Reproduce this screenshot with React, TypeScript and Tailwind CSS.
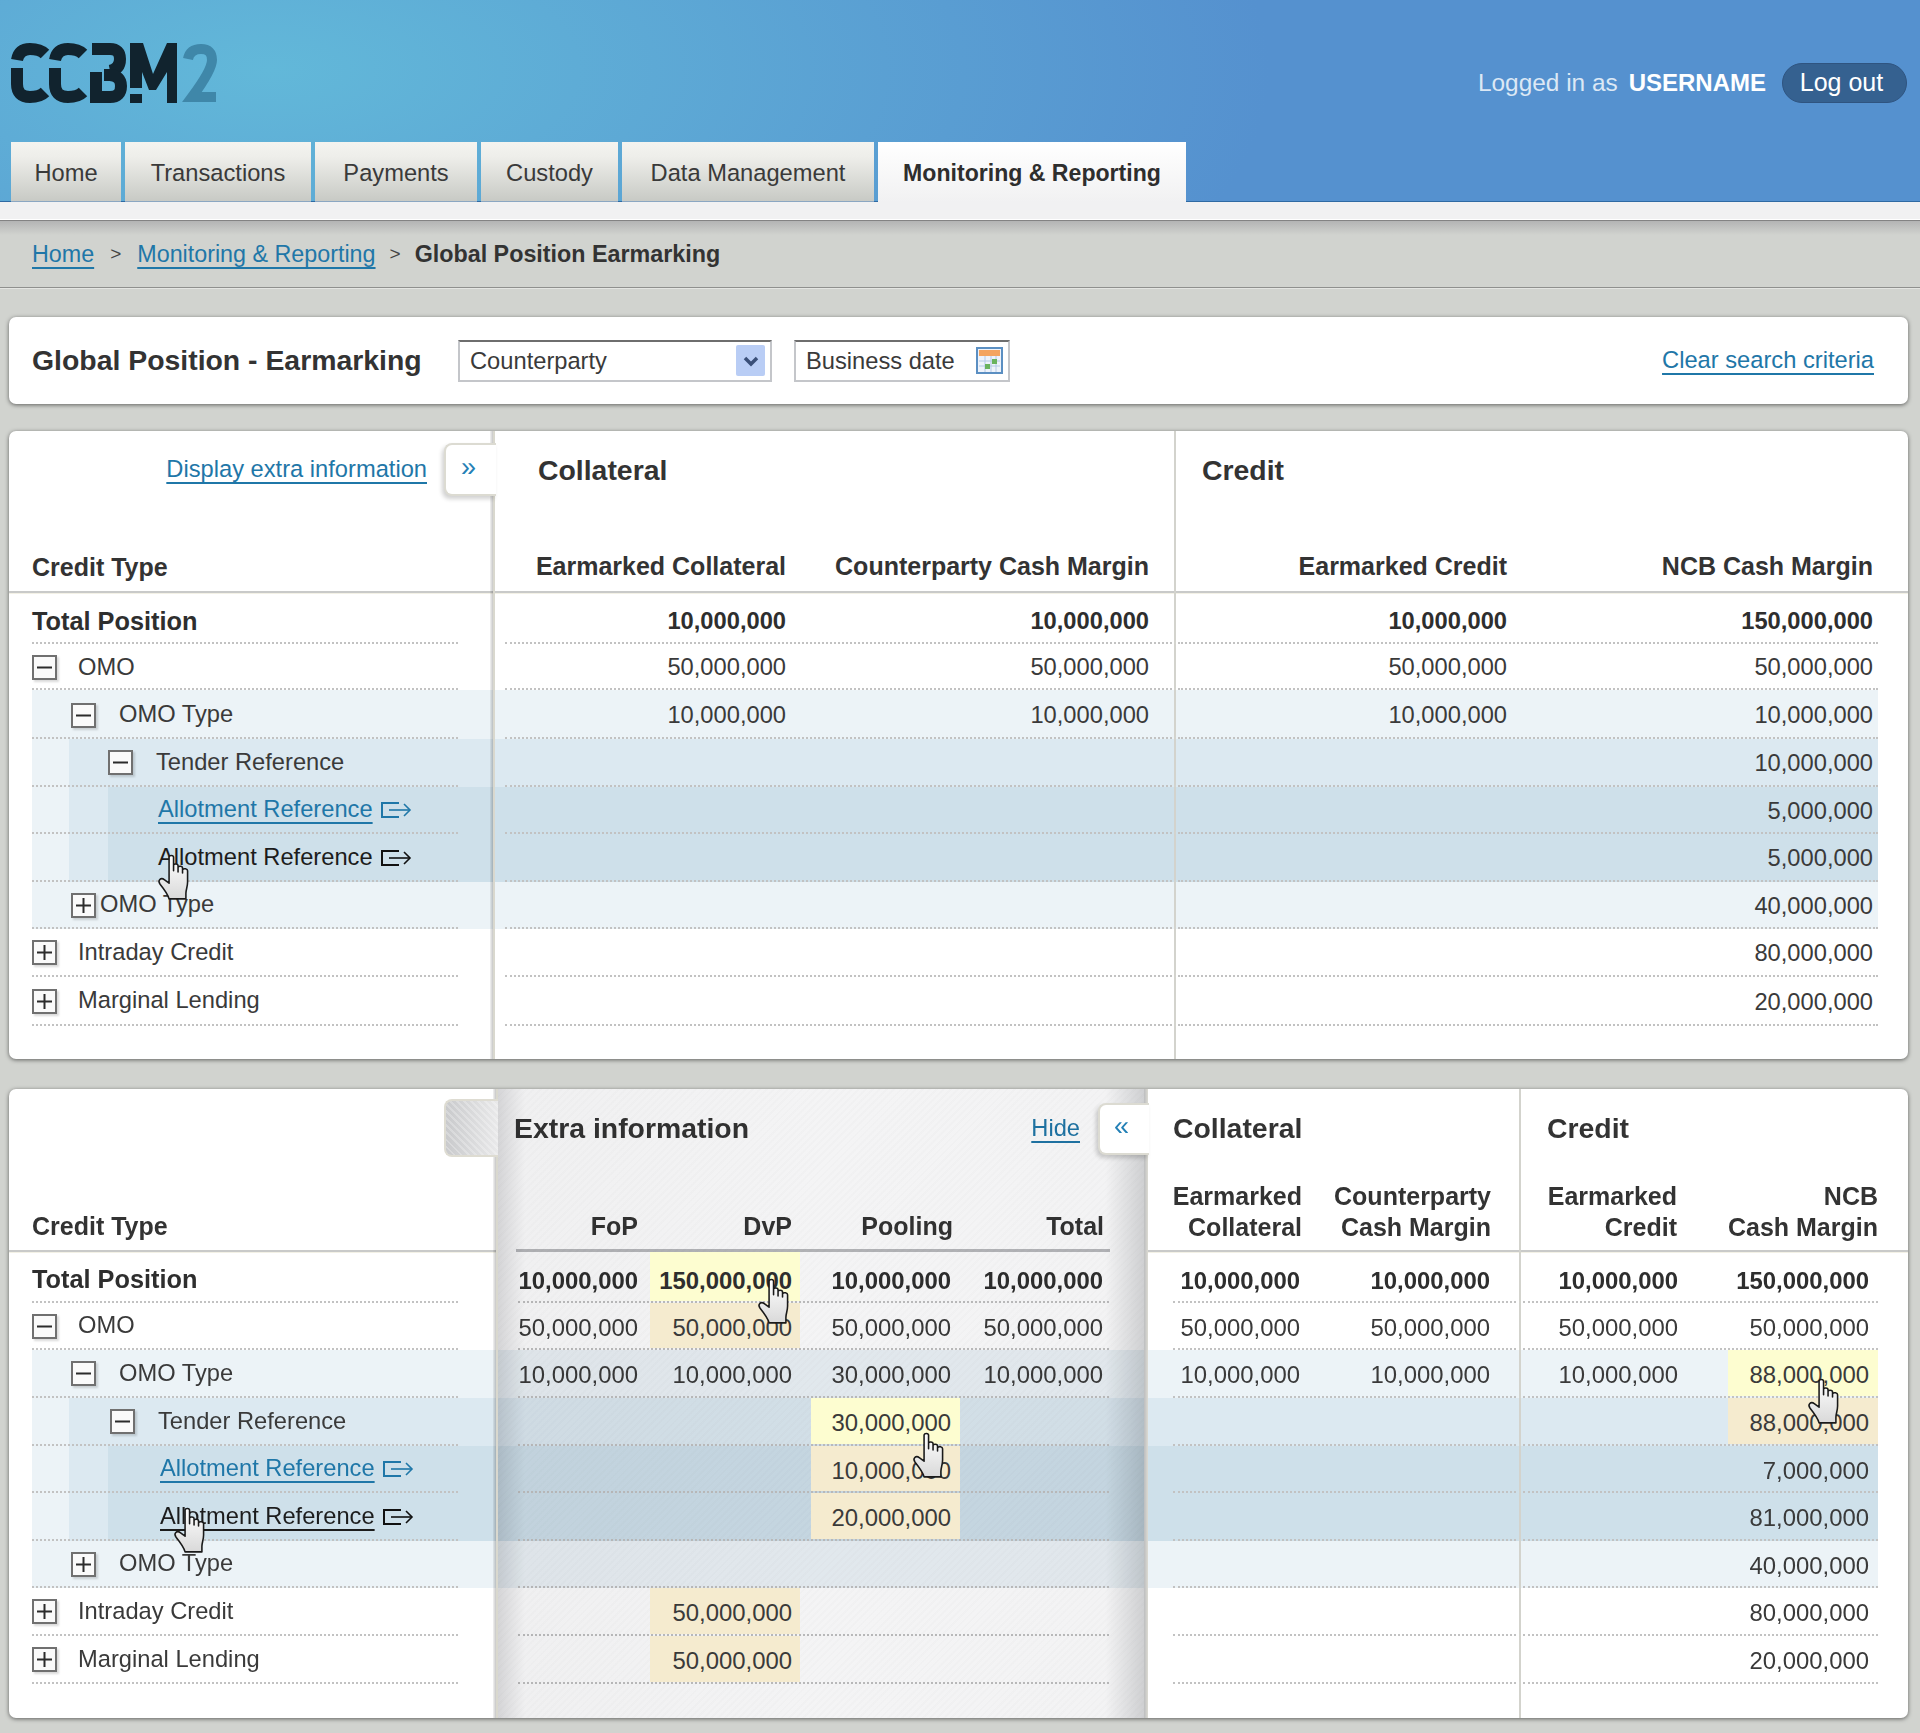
import React from "react";

type HL = "y" | "t" | undefined;

const Hand = ({ className }: { className: string }) => (
  <svg className={`absolute z-30 ${className}`} width="36" height="46" viewBox="0 0 29 41">
    <defs>
      <linearGradient id="handfill" x1="0" y1="0" x2="0" y2="1">
        <stop offset="0" stopColor="#ffffff" />
        <stop offset="1" stopColor="#d9d9d9" />
      </linearGradient>
    </defs>
    <path
      d="M11 3C11 .8 15 .8 15 3V15V10C15 8.5 19 8.5 19 10.500V16V12C19 10.500 23 10.500 23 12.500V17V14C24 12.500 27.500 13 27.500 15V25C27.500 29 26 32 26 35V40H11C10 36 7 32 3 27C.5 23.500 3.500 20.500 7 23L11 26Z"
      fill="url(#handfill)"
      stroke="#1a1a1a"
      strokeWidth="1.400"
      strokeLinejoin="round"
    />
  </svg>
);

const Box = ({ open }: { open: boolean }) => (
  <span className="flex h-[25px] w-[25px] shrink-0 items-center justify-center border-2 border-[#707070] bg-[#fafafa] shadow-[2px_2px_2px_rgba(0,0,0,0.15)]">
    <svg width="17" height="17" viewBox="0 0 17 17">
      <path d={open ? "M1 8.500H16" : "M1 8.500H16M8.500 1V16"} stroke="#2b2b2b" strokeWidth="2" />
    </svg>
  </span>
);

const ExitIcon = ({ color }: { color: string }) => (
  <svg className="ml-[7px] shrink-0" width="32" height="18" viewBox="0 0 32 18" fill="none" stroke={color} strokeWidth="2">
    <path d="M19 2H2V16H19" />
    <path d="M9 9H30" strokeWidth="1.600" />
    <path d="M24 3L30 9L24 15" strokeWidth="1.600" />
  </svg>
);

const A = ({ children, className = "" }: { children: React.ReactNode; className?: string }) => (
  <a className={`cursor-pointer text-[#1f77a8] underline decoration-[2px] underline-offset-[5px] ${className}`}>{children}</a>
);

const Chevrons = ({ children }: { children: React.ReactNode }) => (
  <span className="pb-[5px] text-[27px] leading-none text-[#2380b6]">{children}</span>
);

const Cell = ({ w, hl, bold, v, pr = "" }: { w: string; hl?: HL; bold?: boolean; v?: string; pr?: string }) => (
  <div
    className={`flex items-center justify-end ${w} ${pr} ${
      hl === "y" ? "relative z-20 bg-[#fdfdd0]" : hl === "t" ? "relative z-20 bg-[#f5ebcf]" : ""
    } ${bold ? "pt-[8px] font-bold text-[#2e2e2e]" : "pt-[4px]"}`}
  >
    {v}
  </div>
);

const bands = [
  "",
  "",
  "bg-[#ecf3f7]",
  "bg-[linear-gradient(90deg,#ecf3f7_37px,#dce9f1_37px)]",
  "bg-[linear-gradient(90deg,#ecf3f7_37px,#dce9f1_37px,#dce9f1_76px,#cee0ea_76px)]",
  "bg-[linear-gradient(90deg,#ecf3f7_37px,#dce9f1_37px,#dce9f1_76px,#cee0ea_76px)]",
  "bg-[#ecf3f7]",
  "",
  "",
];

const Labels = ({ i, second }: { i: number; second: boolean }) => {
  if (i === 0) return <span className="text-[25.300px] font-bold text-[#2e2e2e]">Total Position</span>;
  if (i === 1)
    return (
      <>
        <Box open />
        <span className="ml-[21px]">OMO</span>
      </>
    );
  if (i === 2)
    return (
      <>
        <span className="ml-[39px]" />
        <Box open />
        <span className="ml-[23px]">OMO Type</span>
      </>
    );
  if (i === 3)
    return (
      <>
        <span className={second ? "ml-[78px]" : "ml-[76px]"} />
        <Box open />
        <span className="ml-[23px]">Tender Reference</span>
      </>
    );
  if (i === 4)
    return (
      <>
        <span className={second ? "ml-[128px]" : "ml-[126px]"} />
        <A>Allotment Reference</A>
        <ExitIcon color="#1f77a8" />
      </>
    );
  if (i === 5)
    return (
      <>
        <span className={second ? "ml-[128px]" : "ml-[126px]"} />
        <a className={second ? "text-[#1c1c1c] underline decoration-[2px] underline-offset-[5px]" : "text-[#1c1c1c]"}>
          Allotment Reference
        </a>
        <ExitIcon color="#111111" />
      </>
    );
  if (i === 6)
    return (
      <>
        <span className="ml-[39px]" />
        <Box open={false} />
        <span className={second ? "ml-[23px]" : "ml-[4px]"}>OMO Type</span>
      </>
    );
  return (
    <>
      <Box open={false} />
      <span className="ml-[21px]">{i === 7 ? "Intraday Credit" : "Marginal Lending"}</span>
    </>
  );
};

const dotted = "flex border-b-2 border-dotted border-[#c2c2c2]";
const vline =
  "absolute top-0 bottom-0 w-[5px] z-[15] bg-[linear-gradient(90deg,rgba(0,0,0,0.05),rgba(0,0,0,0.22)_60%,#d9d8ce_60%)]";

const m10 = "10,000,000";
const m50 = "50,000,000";

const t1Heights = ["h-[51px]", "h-[46px]", "h-[49px]", "h-[48px]", "h-[47px]", "h-[48px]", "h-[47px]", "h-[48px]", "h-[49px]"];
const t1Values: string[][] = [
  [m10, m10, m10, "150,000,000"],
  [m50, m50, m50, m50],
  [m10, m10, m10, m10],
  ["", "", "", m10],
  ["", "", "", "5,000,000"],
  ["", "", "", "5,000,000"],
  ["", "", "", "40,000,000"],
  ["", "", "", "80,000,000"],
  ["", "", "", "20,000,000"],
];

const TableOne = () => (
  <section className="relative h-[628px] rounded-[7px] bg-white shadow-[0_1px_4px_rgba(0,0,0,0.55)]">
    <header className="flex h-[162px] border-b-2 border-[#c9cac9] shadow-[0_1px_0_#f3f1e6]">
      <div className="flex w-[486px] flex-col justify-between pb-[9px] pt-[22px]">
        <div className="pr-[68px] text-right leading-[32px]">
          <A>Display extra information</A>
        </div>
        <div className="pl-[23px] text-[25px] font-bold leading-[30px] text-[#333333]">Credit Type</div>
      </div>
      <div className="flex w-[679px] flex-col justify-between pb-[10px] pt-[23px] font-bold text-[#333333]">
        <div className="pl-[43px] text-[28.400px] leading-[32px]">Collateral</div>
        <div className="flex text-[25px] leading-[30px]">
          <div className="w-[291px] text-right">Earmarked Collateral</div>
          <div className="w-[363px] text-right">Counterparty Cash Margin</div>
        </div>
      </div>
      <div className="flex w-[734px] flex-col justify-between pb-[10px] pt-[23px] font-bold text-[#333333]">
        <div className="pl-[28px] text-[28.400px] leading-[32px]">Credit</div>
        <div className="flex text-[25px] leading-[30px]">
          <div className="w-[333px] text-right">Earmarked Credit</div>
          <div className="w-[366px] text-right">NCB Cash Margin</div>
        </div>
      </div>
    </header>
    {t1Values.map((vals, i) => (
      <div key={i} className={`ml-[23px] flex w-[1846px] text-[23.700px] ${t1Heights[i]} ${bands[i]}`}>
        <div className={`${dotted} w-[426px] items-center ${i === 0 ? "pt-[8px]" : i < 3 ? "pt-[3px]" : "pt-[1px]"}`}>
          <Labels i={i} second={false} />
        </div>
        <div className="w-[47px]" />
        <div className={`${dotted} w-[667px]`}>
          <Cell w="w-[281px]" v={vals[0]} bold={i === 0} />
          <Cell w="w-[363px]" v={vals[1]} bold={i === 0} />
        </div>
        <div className="w-[6px]" />
        <div className={`${dotted} w-[700px]`}>
          <Cell w="w-[329px]" v={vals[2]} bold={i === 0} />
          <Cell w="w-[366px]" v={vals[3]} bold={i === 0} />
        </div>
      </div>
    ))}
    <div className={`${vline} left-[481px]`} />
    <div className="absolute top-0 bottom-0 left-[1165px] z-[15] w-[2px] bg-[#d3d3cd]" />
    <div className="absolute left-[435px] top-[12px] z-20 flex h-[53px] w-[52px] items-center rounded-l-[8px] border-2 border-r-0 border-[#dcdbd2] bg-white pl-[15px] shadow-[-2px_3px_4px_rgba(0,0,0,0.18)]">
      <Chevrons>»</Chevrons>
    </div>
    <Hand className="left-[146px] top-[423px]" />
  </section>
);

const t2Heights = ["h-[51px]", "h-[47px]", "h-[48px]", "h-[48px]", "h-[47px]", "h-[48px]", "h-[47px]", "h-[48px]", "h-[48px]"];
const t2Rows: { v: string[]; hl?: Record<number, HL> }[] = [
  { v: [m10, "150,000,000", m10, m10, m10, m10, m10, "150,000,000"], hl: { 1: "y" } },
  { v: [m50, m50, m50, m50, m50, m50, m50, m50], hl: { 1: "t" } },
  { v: [m10, m10, "30,000,000", m10, m10, m10, m10, "88,000,000"], hl: { 7: "y" } },
  { v: ["", "", "30,000,000", "", "", "", "", "88,000,000"], hl: { 2: "y", 7: "t" } },
  { v: ["", "", m10, "", "", "", "", "7,000,000"], hl: { 2: "t" } },
  { v: ["", "", "20,000,000", "", "", "", "", "81,000,000"], hl: { 2: "t" } },
  { v: ["", "", "", "", "", "", "", "40,000,000"] },
  { v: ["", m50, "", "", "", "", "", "80,000,000"], hl: { 1: "t" } },
  { v: ["", m50, "", "", "", "", "", "20,000,000"], hl: { 1: "t" } },
];

const TableTwo = () => (
  <section className="relative isolate h-[629px] rounded-[7px] bg-white shadow-[0_1px_4px_rgba(0,0,0,0.55)]">
    <header className="flex h-[163px]">
      <div className="flex w-[488px] flex-col justify-end border-b-2 border-[#c9cac9] pb-[9px] shadow-[0_1px_0_#f3f1e6]">
        <div className="pl-[23px] text-[25px] font-bold leading-[30px] text-[#333333]">Credit Type</div>
      </div>
      <div className="flex w-[651px] flex-col justify-between pt-[23px] font-bold text-[#333333]">
        <div className="flex items-center justify-between pl-[17px] pr-[68px] leading-[32px]">
          <span className="text-[28.400px]">Extra information</span>
          <A className="text-[23.700px] font-normal">Hide</A>
        </div>
        <div className="ml-[19px] flex w-[594px] border-b-[3px] border-[#b9babd] pb-[8px] text-[25px] leading-[30px]">
          <div className="w-[122px] text-right">FoP</div>
          <div className="w-[154px] text-right">DvP</div>
          <div className="w-[161px] text-right">Pooling</div>
          <div className="w-[151px] text-right">Total</div>
        </div>
      </div>
      <div className="flex w-[372px] flex-col justify-between border-b-2 border-[#c9cac9] pb-[7px] pt-[23px] font-bold text-[#333333] shadow-[0_1px_0_#f3f1e6]">
        <div className="pl-[25px] text-[28.400px] leading-[32px]">Collateral</div>
        <div className="flex text-[25px] leading-[31px]">
          <div className="w-[154px] text-right">
            Earmarked
            <br />
            Collateral
          </div>
          <div className="w-[189px] text-right">
            Counterparty
            <br />
            Cash Margin
          </div>
        </div>
      </div>
      <div className="flex w-[388px] flex-col justify-between border-b-2 border-[#c9cac9] pb-[7px] pt-[23px] font-bold text-[#333333] shadow-[0_1px_0_#f3f1e6]">
        <div className="pl-[27px] text-[28.400px] leading-[32px]">Credit</div>
        <div className="flex text-[25px] leading-[31px]">
          <div className="w-[157px] text-right">
            Earmarked
            <br />
            Credit
          </div>
          <div className="w-[201px] text-right">
            NCB
            <br />
            Cash Margin
          </div>
        </div>
      </div>
    </header>
    {t2Rows.map((r, i) => {
      const bold = i === 0;
      const hl = r.hl || {};
      return (
        <div key={i} className={`ml-[23px] flex w-[1846px] text-[23.900px] ${t2Heights[i]} ${bands[i]}`}>
          <div className={`${dotted} w-[426px] items-center text-[23.700px] ${i === 0 ? "pt-[6px]" : "pt-[1px]"}`}>
            <Labels i={i} second />
          </div>
          <div className="w-[60px]" />
          <div className={`${dotted} w-[591px]`}>
            <Cell w="w-[120px]" v={r.v[0]} bold={bold} />
            <div className="w-[12px]" />
            <Cell w="w-[150px]" pr="pr-[8px]" v={r.v[1]} bold={bold} hl={hl[1]} />
            <div className="w-[11px]" />
            <Cell w="w-[149px]" pr="pr-[9px]" v={r.v[2]} bold={bold} hl={hl[2]} />
            <Cell w="w-[143px]" v={r.v[3]} bold={bold} />
          </div>
          <div className="w-[64px]" />
          <div className={`${dotted} w-[343px]`}>
            <Cell w="w-[127px]" v={r.v[4]} bold={bold} />
            <Cell w="w-[190px]" v={r.v[5]} bold={bold} />
          </div>
          <div className="w-[7px]" />
          <div className={`${dotted} w-[355px]`}>
            <Cell w="w-[155px]" v={r.v[6]} bold={bold} />
            <div className="w-[50px]" />
            <Cell w="w-[150px]" pr="pr-[9px]" v={r.v[7]} bold={bold} hl={hl[7]} />
          </div>
        </div>
      );
    })}
    <div className="pointer-events-none absolute top-0 bottom-0 left-[488px] z-10 w-[647px] bg-[image:repeating-linear-gradient(135deg,rgba(0,0,0,0.012)_0_2px,transparent_2px_5px),linear-gradient(90deg,#d4d4d6,#f0f0f1_28px,#f4f4f5_50%,#f3f3f4_94%,#cfd0d2)] mix-blend-multiply" />
    <div className={`${vline} left-[484px]`} />
    <div className="absolute top-0 bottom-0 left-[1135px] z-[15] w-[4px] bg-[linear-gradient(90deg,#bcbdbf,#dcdbd3)]" />
    <div className="absolute top-0 bottom-0 left-[1510px] z-[15] w-[2px] bg-[#d3d3cd]" />
    <div className="absolute left-[435px] top-[10px] z-20 h-[58px] w-[54px] rounded-l-[8px] border-2 border-r-0 border-[#dedcd2] bg-[image:repeating-linear-gradient(45deg,rgba(255,255,255,0.25)_0_2px,transparent_2px_5px),linear-gradient(90deg,#c9cacc,#e9e9ea)]" />
    <div className="absolute left-[1089px] top-[14px] z-20 flex h-[52px] w-[51px] items-center rounded-l-[8px] border-2 border-r-0 border-[#dcdbd2] bg-white pl-[14px] shadow-[-2px_3px_4px_rgba(0,0,0,0.18)]">
      <Chevrons>«</Chevrons>
    </div>
    <Hand className="left-[162px] top-[418px]" />
    <Hand className="left-[746px] top-[189px]" />
    <Hand className="left-[901px] top-[343px]" />
    <Hand className="left-[1796px] top-[289px]" />
  </section>
);

const Logo = () => (
  <svg width="230" height="80" viewBox="0 0 230 80" aria-label="CCBM2 logo">
    <g fill="none" stroke="#11232e" strokeWidth="12">
      <path d="M17 18Q19 7 30 7Q40 7 45 12" />
      <path d="M17 26V42Q17 55 30 55Q40 55 45 50" />
      <path d="M55 18Q57 7 68 7Q78 7 83 12" />
      <path d="M55 26V42Q55 55 68 55Q78 55 83 50" />
      <path d="M92 7H110Q120 7 120 17Q120 27 110 29" />
      <path d="M96 30V55H110Q121 55 121 44Q121 34 110 33H104" />
    </g>
    <g fill="#11232e">
      <path d="M130 1H143L153 32L167 1H177V61H167V30L156 48H149L142 30V46H130Z" />
      <rect x="130" y="52" width="12" height="9" />
    </g>
    <path d="M188 17Q190 7 201 7Q212 7 212 18Q212 28 192 55H216" fill="none" stroke="#3f87a9" strokeWidth="10" />
  </svg>
);

const tabs = [
  { t: "Home", w: "w-[110px]" },
  { t: "Transactions", w: "w-[186px]" },
  { t: "Payments", w: "w-[162px]" },
  { t: "Custody", w: "w-[137px]" },
  { t: "Data Management", w: "w-[252px]" },
];

export default function App() {
  return (
    <div className="min-h-[1733px] bg-[#d1d3cf] font-['Liberation_Sans',Arial,sans-serif] text-[23.700px] text-[#3a3a3a] blur-[0.5px]">
      <div className="h-[202px] border-b border-[#2f6aa3] bg-[radial-gradient(ellipse_1000px_420px_at_270px_70px,#62b8d9,#5591cf)]">
        <div className="flex h-[142px] items-start justify-between">
          <div className="pt-[42px]">
            <Logo />
          </div>
          <div className="flex items-center pr-[13px] pt-[63px]">
            <span className="text-[24.400px] text-[#dce8f5]">Logged in as</span>
            <span className="ml-[11px] text-[24px] font-bold text-white">USERNAME</span>
            <span className="ml-[16px] flex h-[40px] w-[125px] items-center justify-center rounded-[20px] border border-[#2f5480] bg-[#356190] pr-[6px] text-[25px] text-white">
              Log out
            </span>
          </div>
        </div>
        <div className="relative -mb-px flex h-[60px] gap-[4px] pl-[11px]">
          {tabs.map((t) => (
            <div
              key={t.t}
              className={`flex items-center justify-center border-b border-[#8ba7c2] bg-[linear-gradient(#f4f4f0,#eeeeea_25%,#c8cac5)] pt-[5px] text-[#3a3a3a] ${t.w}`}
            >
              {t.t}
            </div>
          ))}
          <div className="flex w-[308px] items-center justify-center bg-[linear-gradient(#ffffff,#f1f1f2)] pt-[2px] text-[23.100px] font-bold text-[#2e2e2e]">
            Monitoring &amp; Reporting
          </div>
        </div>
      </div>
      <div className="h-[17px] bg-[#f1f1f2]" />
      <div className="h-px bg-white" />
      <div className="h-px bg-[#838383]" />
      <nav className="flex h-[66px] items-center bg-[linear-gradient(#b3b4b4,#d1d3cf_14px)] pl-[32px] pt-[1px] text-[23.300px]">
        <A>Home</A>
        <span className="mx-[16px] text-[19px] text-[#444444]">&gt;</span>
        <A>Monitoring &amp; Reporting</A>
        <span className="mx-[14px] text-[19px] text-[#444444]">&gt;</span>
        <b className="text-[#333333]">Global Position Earmarking</b>
      </nav>
      <div className="h-px bg-[#8f908e]" />
      <div className="h-px bg-[#e4e5e2]" />
      <main className="flex flex-col pb-[15px] pl-[9px] pr-[12px] pt-[28px]">
        <section className="flex h-[87px] items-center rounded-[7px] bg-white shadow-[0_1px_4px_rgba(0,0,0,0.55)]">
          <h1 className="w-[449px] pl-[23px] text-[28.400px] font-bold text-[#333333]">Global Position - Earmarking</h1>
          <div className="flex h-[42px] w-[314px] items-center justify-between border-2 border-[#c4c6ca] border-t-[#6e6e6e] pl-[10px] pr-[5px]">
            <span className="pt-[2px]">Counterparty</span>
            <span className="flex h-[31px] w-[29px] items-center justify-center rounded-[2px] bg-[#b9cdf5]">
              <svg width="16" height="12" viewBox="0 0 16 12" fill="none">
                <path d="M2 3L8 9L14 3" stroke="#3a4f78" strokeWidth="3.500" />
              </svg>
            </span>
          </div>
          <div className="ml-[22px] flex h-[42px] w-[216px] items-center justify-between border-2 border-[#c4c6ca] border-t-[#6e6e6e] pl-[10px] pr-[5px]">
            <span className="pt-[2px]">Business date</span>
            <svg width="27" height="27" viewBox="0 0 27 27">
              <rect x="1" y="1" width="25" height="25" fill="#eef3fb" stroke="#5b8fc2" strokeWidth="2" />
              <rect x="3" y="3" width="21" height="6" fill="#f4a45f" />
              <path d="M3 14H24M3 19H24M9 9V25M15 9V25M20 9V25" stroke="#b4c9e6" strokeWidth="1" />
              <rect x="9" y="17" width="5" height="5" fill="#6ab35e" />
              <rect x="16" y="12" width="5" height="5" fill="#6ab35e" />
            </svg>
          </div>
          <div className="ml-auto pr-[34px]">
            <A>Clear search criteria</A>
          </div>
        </section>
        <div className="mt-[27px]">
          <TableOne />
        </div>
        <div className="mt-[30px]">
          <TableTwo />
        </div>
      </main>
    </div>
  );
}
